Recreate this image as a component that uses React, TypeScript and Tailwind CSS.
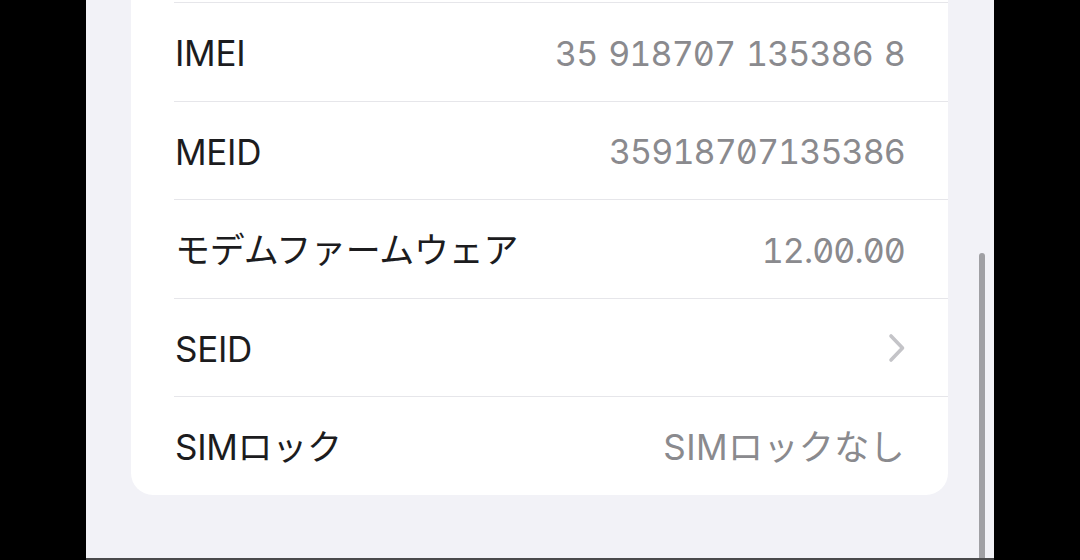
import React from "react";

const rows: { label: string; value?: string; digits?: boolean; chevron?: boolean }[] = [
  { label: "IMEI", value: "35 918707 135386 8", digits: true },
  { label: "MEID", value: "35918707135386", digits: true },
  { label: "モデムファームウェア", value: "12.00.00", digits: true },
  { label: "SEID", chevron: true },
  { label: "SIMロック", value: "SIMロックなし" },
];

export default function App() {
  return (
    <div className="flex h-[560px] w-[1080px] overflow-hidden bg-black font-['Inter','Noto_Sans_CJK_JP',sans-serif]">
      <div className="w-[86px] shrink-0 bg-black" />
      <div className="relative w-[908px] shrink-0 bg-[#f2f2f7] pl-[45px]">
        <div className="w-[817px] overflow-hidden rounded-b-[22px] bg-white">
          <div className="h-[2px]" />
          <div className="ml-[43px] h-px bg-[#e6e6ea]" />
          {rows.map((r, i) => (
            <div key={r.label}>
              <div className="flex h-[97.5px] items-center justify-between pl-[44px] pr-[43px] pt-[4px]">
                <span className="text-[35px] leading-none tracking-[-0.3px] text-[#1c1c1e]">
                  {r.label}
                </span>
                {r.value && r.digits && (
                  <span className="text-[34px] leading-none tracking-[-0.9px] text-[#8a8a8e] tabular-nums slashed-zero [word-spacing:2.7px]">
                    {r.value}
                  </span>
                )}
                {r.value && !r.digits && (
                  <span className="text-[35px] leading-none tracking-[0.4px] text-[#8a8a8e]">
                    {r.value}
                  </span>
                )}
                {r.chevron && (
                  <svg width="18" height="30" viewBox="0 0 18 30" className="-mr-[1px] -mt-[2px]">
                    <path
                      d="M3 3 L14.5 15 L3 27"
                      fill="none"
                      stroke="#c4c4c8"
                      strokeWidth="3.6"
                      strokeLinecap="round"
                      strokeLinejoin="round"
                    />
                  </svg>
                )}
              </div>
              {i < rows.length - 1 && <div className="ml-[43px] h-px bg-[#e6e6ea]" />}
            </div>
          ))}
        </div>
        <div className="absolute right-[9px] top-[253px] h-[320px] w-[6px] rounded-full bg-[#a0a0a4]" />
        <div className="absolute bottom-0 left-0 h-[2px] w-full bg-[#4a4a4c]" />
      </div>
      <div className="w-[86px] shrink-0 bg-black" />
    </div>
  );
}
